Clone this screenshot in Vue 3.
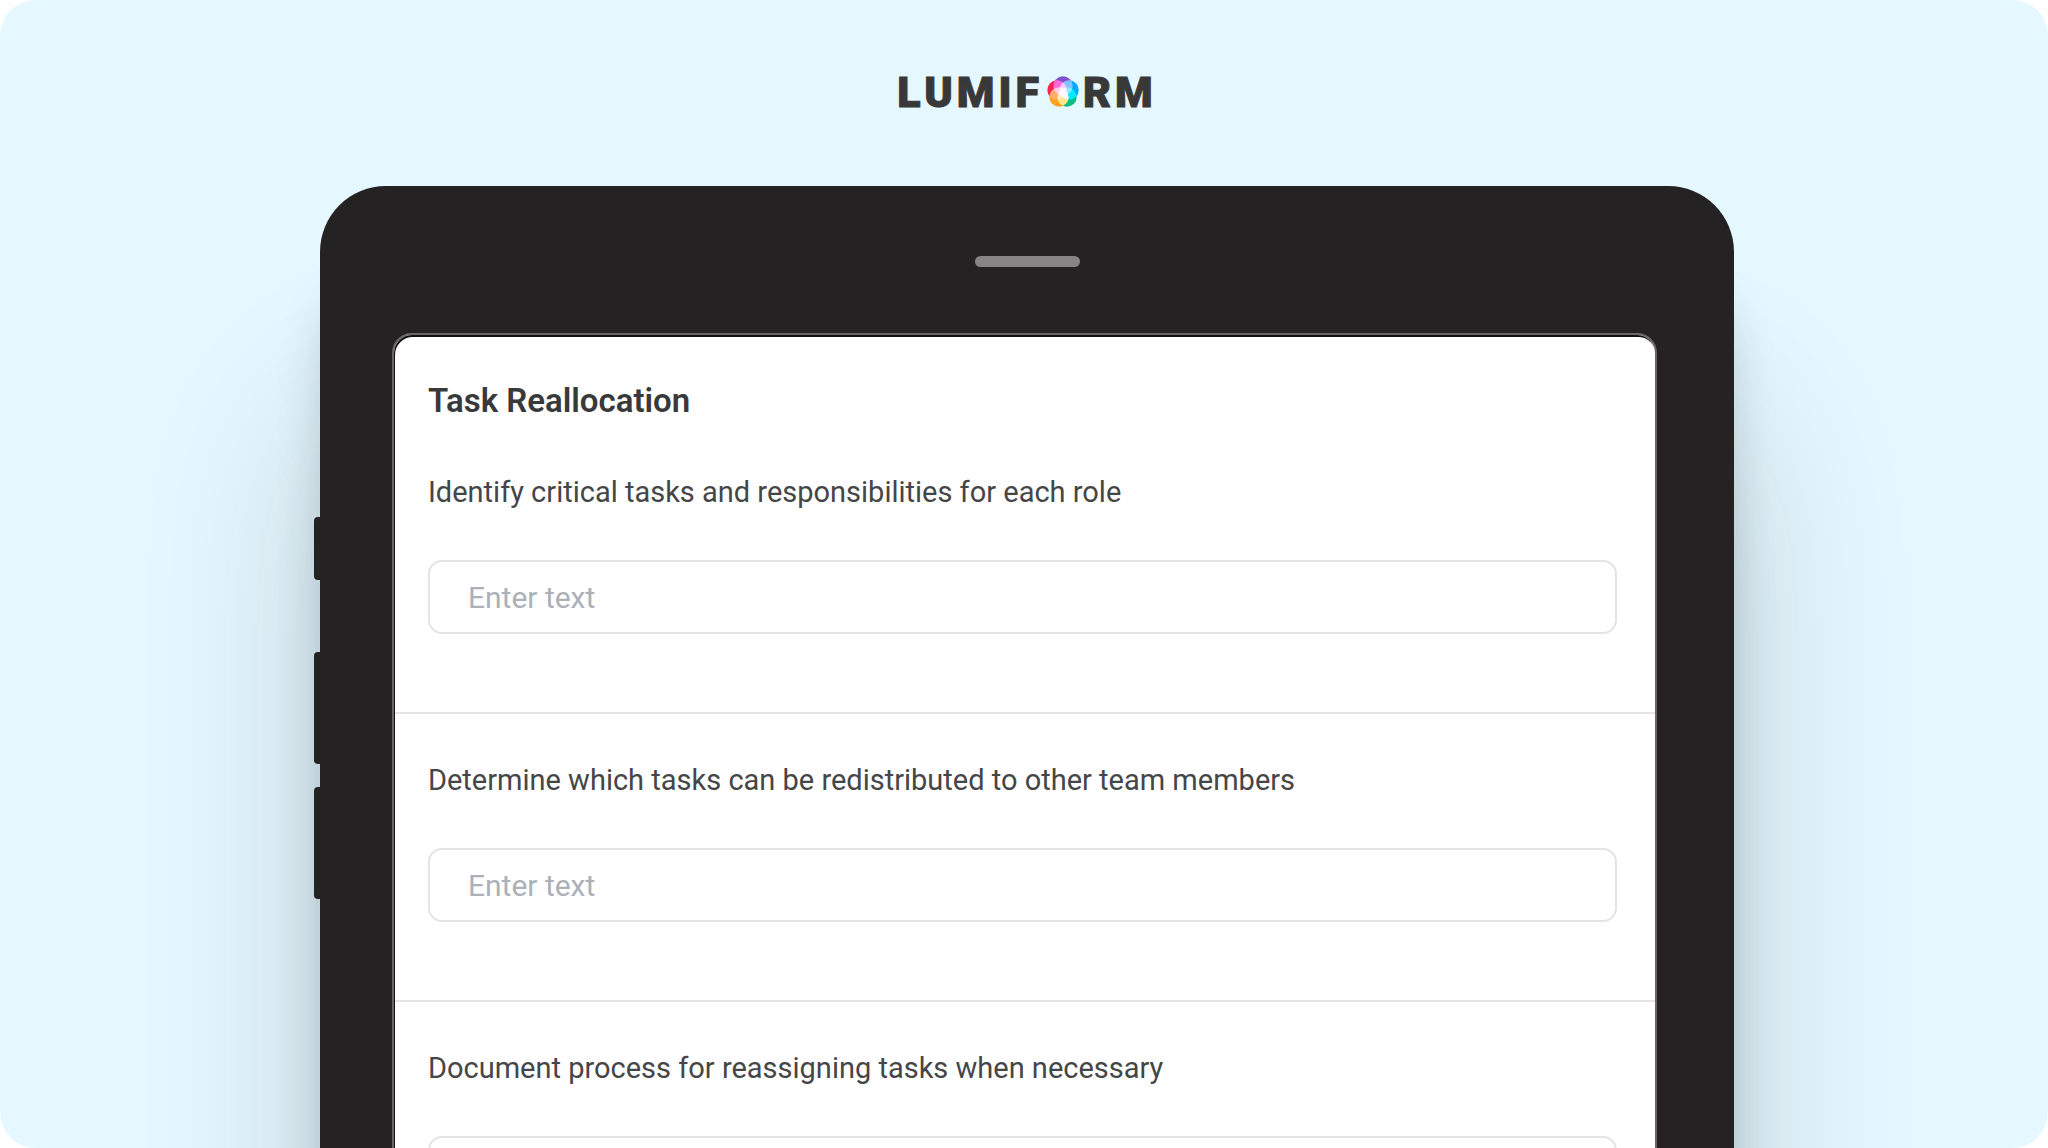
<script setup>
const questions = [
  { id: 'critical-tasks', label: 'Identify critical tasks and responsibilities for each role' },
  { id: 'redistribute', label: 'Determine which tasks can be redistributed to other team members' },
  { id: 'reassign', label: 'Document process for reassigning tasks when necessary' },
]

const petals = [
  { cx: 16, cy: 10, fill: '#8250cd' },
  { cx: 22, cy: 14, fill: '#00a8ff' },
  { cx: 20, cy: 21, fill: '#00bf80' },
  { cx: 12, cy: 21, fill: '#ffa020' },
  { cx: 10, cy: 14, fill: '#fb2355' },
]
</script>

<template>
  <main class="stage">
    <header class="logo" aria-label="Lumiform">
      <span>LUMIF</span>
      <svg class="flower" viewBox="0 0 32 32" aria-hidden="true">
        <circle v-for="p in petals" :key="p.fill" class="petal" :cx="p.cx" :cy="p.cy" r="9.7" :fill="p.fill" />
      </svg>
      <span>RM</span>
    </header>

    <div class="tablet">
      <div class="keys">
        <span class="key key-small"></span>
        <span class="key volume-up"></span>
        <span class="key"></span>
      </div>
      <div class="body">
        <div class="speaker"></div>
        <form class="screen" @submit.prevent>
          <h1 class="title">Task Reallocation</h1>
          <section v-for="q in questions" :key="q.id" class="question">
            <label class="label" :for="q.id">{{ q.label }}</label>
            <input :id="q.id" class="field" type="text" placeholder="Enter text" />
          </section>
        </form>
      </div>
    </div>
  </main>
</template>

<style>
body {
  margin: 0;
  background: #fff;
}
</style>

<style scoped>
.stage {
  box-sizing: border-box;
  height: 100vh;
  overflow: hidden;
  border-radius: 36px;
  background: #e6f8ff;
  display: flex;
  flex-direction: column;
  align-items: center;
  font-family: Roboto, "Liberation Sans", sans-serif;
  color: #38393a;
}

.logo {
  flex: none;
  height: 184px;
  padding: 0 0 2px 6px;
  display: flex;
  align-items: center;
  gap: 4px;
  font-size: 43px;
  line-height: 52px;
  font-weight: 900;
  letter-spacing: 4px;
  color: #383838;
  -webkit-text-stroke: 1px #383838;
}

.flower {
  width: 32px;
  height: 32px;
  isolation: isolate;
}

.petal {
  mix-blend-mode: screen;
}

.tablet {
  flex: none;
  width: 69.34%;
  display: flex;
}

.keys {
  flex: none;
  width: 6px;
  padding-top: 331px;
  display: flex;
  flex-direction: column;
}

.key {
  height: 112px;
  border-radius: 4px 0 0 4px;
  background: #242222;
  position: relative;
  z-index: 1;
}

.key-small {
  height: 63px;
  margin-bottom: 72px;
}

.volume-up {
  margin-bottom: 23px;
}

.body {
  flex: 1;
  box-sizing: border-box;
  padding: 70px 77px 77px 72px;
  border-radius: 66px;
  background: #242222;
  box-shadow: 0 230px 180px rgba(20, 30, 35, 0.2), 0 100px 50px -8px rgba(20, 30, 35, 0.22);
}

.speaker {
  width: 105px;
  height: 11px;
  margin: 0 auto 66px;
  border-radius: 6px;
  background: #868484;
  position: relative;
  left: 3px;
}

.screen {
  border: 2px solid #6b6565;
  border-radius: 20px;
  background: #fff;
  box-shadow: inset 1px 2px 0 #111;
  padding: 2px 0 0 1px;
}

.title {
  margin: 0;
  padding: 42px 33px 3px;
  font-size: 33px;
  line-height: 44px;
  font-weight: 600;
}

.question {
  padding: 44px 38px 78px 33px;
  border-bottom: 2px solid #e4e4e4;
  display: flex;
  flex-direction: column;
  gap: 46px;
}

.label {
  font-size: 29px;
  line-height: 44px;
  color: #454647;
}

.field {
  box-sizing: border-box;
  width: 100%;
  height: 74px;
  padding: 0 38px;
  border: 2px solid #e4e4e4;
  border-radius: 14px;
  background: #fff;
  font-family: inherit;
  font-size: 30px;
  color: #454647;
}

.field::placeholder {
  color: #abb0b9;
  opacity: 1;
}
</style>
